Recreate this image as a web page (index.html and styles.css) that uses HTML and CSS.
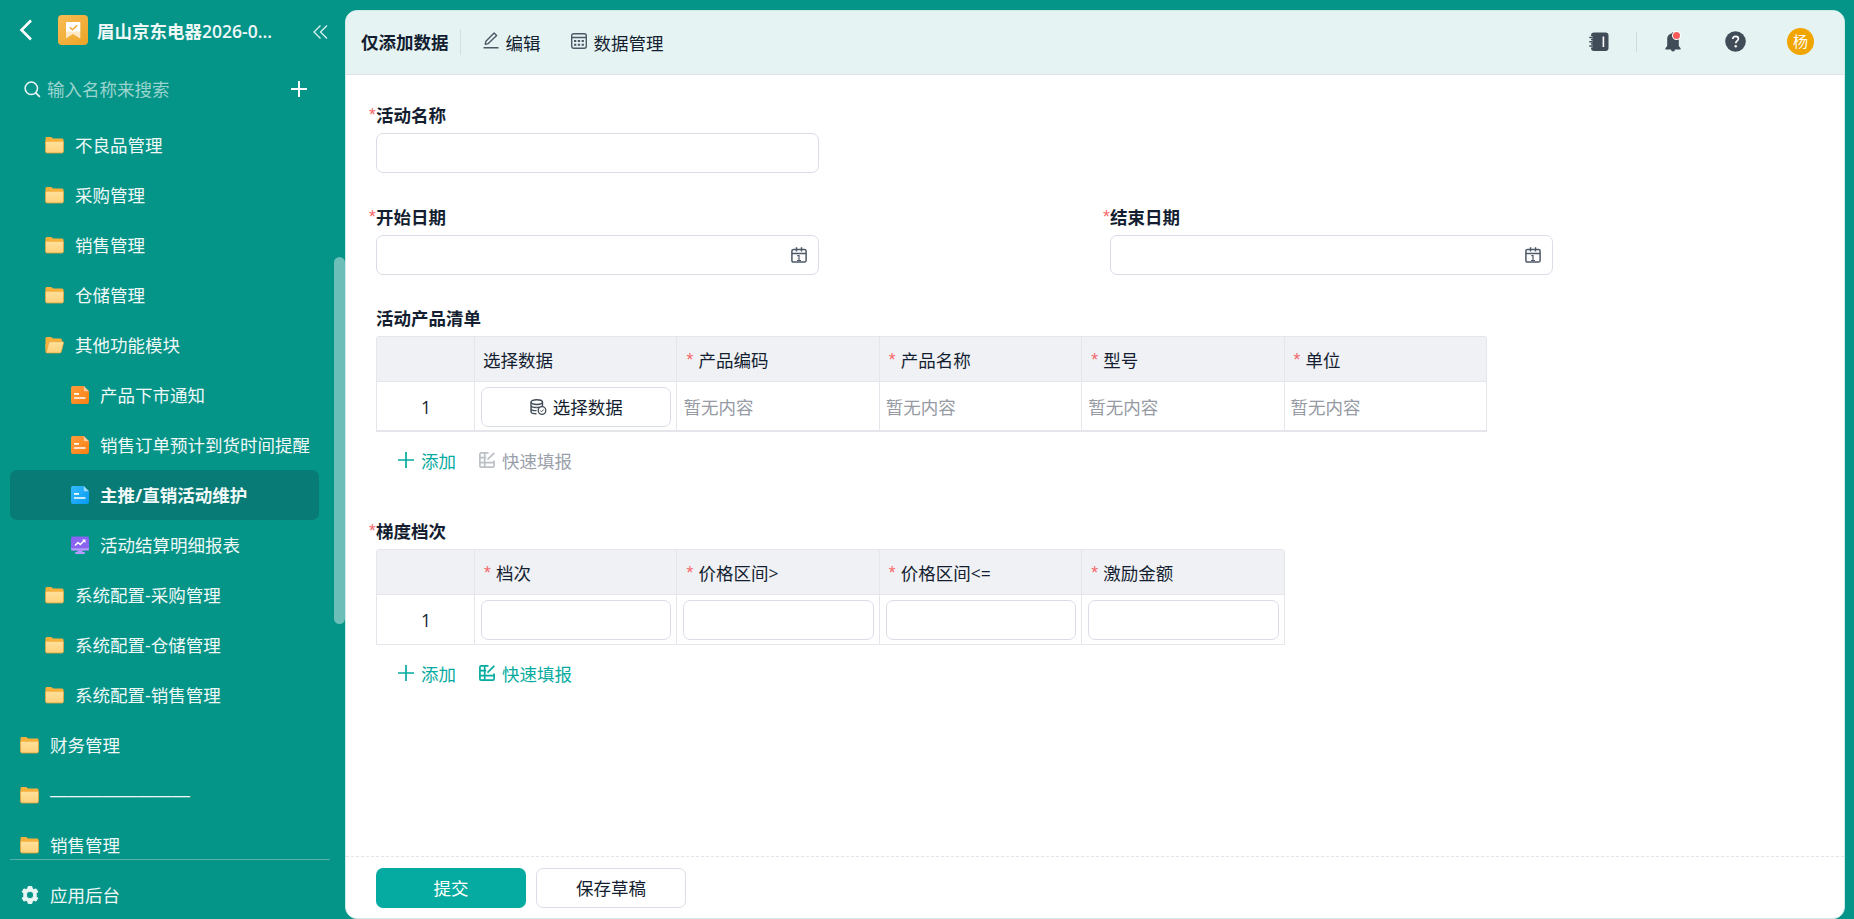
FILE: index.html
```html
<!DOCTYPE html>
<html lang="zh-CN">
<head>
  <meta charset="utf-8">
  <meta name="viewport" content="width=device-width, initial-scale=1">
  <title>主推/直销活动维护</title>
  <link rel="stylesheet" href="styles.css">
</head>
<body>
  <svg class="sprite" width="0" height="0" aria-hidden="true">
    <defs>
      <linearGradient id="folder-front" x1="0" y1="0" x2="0" y2="1">
        <stop offset="0" stop-color="#ffe09b"/>
        <stop offset="1" stop-color="#ffd27a"/>
      </linearGradient>
      <linearGradient id="logo-bg" x1="0" y1="0" x2="1" y2="1">
        <stop offset="0" stop-color="#f8bc55"/>
        <stop offset="1" stop-color="#eda425"/>
      </linearGradient>
      <linearGradient id="form-orange" x1="0" y1="0" x2="1" y2="1">
        <stop offset="0" stop-color="#ff9c3c"/>
        <stop offset="1" stop-color="#fb7f14"/>
      </linearGradient>
      <linearGradient id="form-blue" x1="0" y1="0" x2="1" y2="1">
        <stop offset="0" stop-color="#35bbff"/>
        <stop offset="1" stop-color="#069af0"/>
      </linearGradient>
    </defs>
    <symbol id="folder" viewBox="0 0 20 18">
      <path d="M.5 2.200C.5 1.100 1.100.5 2.200.5h4.300l2.200 1.700h9c1.100 0 1.800.7 1.800 1.800v6H.5z" fill="#f6b03c"/>
      <path d="M.5 5.500h19v10c0 1.200-.7 1.900-1.900 1.900H2.400c-1.200 0-1.900-.7-1.900-1.900z" fill="url(#folder-front)"/>
      <path d="M.5 5v10.500c0 1.200.7 1.900 1.900 1.900h15.200c1.200 0 1.900-.7 1.900-1.900V5" fill="none" stroke="#e3a63f" stroke-width=".9"/>
    </symbol>
    <symbol id="folder-open" viewBox="0 0 20 18">
      <path d="M.5 2.200C.5 1.100 1.100.5 2.200.5h4.300l2.200 1.700h7.300c1.100 0 1.800.7 1.800 1.800v10H2.400c-1.200 0-1.900-.7-1.900-1.900z" fill="#f6b03c"/>
      <path d="M.5 8v8c0 .8.600 1.400 1.400 1.400h3L5 8z" fill="#f6b03c"/>
      <path d="M5.200 5.500h13.300c.8 0 1.200.6 1 1.300l-2.300 9.200c-.2.900-.8 1.400-1.700 1.400H2.600c-.8 0-1.200-.5-1-1.200L3.900 6.500c.1-.6.600-1 1.300-1z" fill="url(#folder-front)" stroke="#e3a63f" stroke-width=".8"/>
    </symbol>
    <symbol id="form-lines" viewBox="0 0 18 18">
      <path d="M12.800 0 18 5.200h-4.200c-.6 0-1-.4-1-1z" fill="#fff" opacity=".55"/>
      <path d="M3 7.800h5M3 12h11.500" stroke="#fff" stroke-width="1.700"/>
    </symbol>
    <symbol id="date" viewBox="0 0 16 16">
      <path d="M2.500 2.500h11c.9 0 1.600.7 1.600 1.600v9.400c0 .9-.7 1.600-1.600 1.600h-11c-.9 0-1.600-.7-1.600-1.600V4.100c0-.9.700-1.600 1.600-1.600zM1 6.500h14M5.500.2v4.300M10.500.2v4.300" fill="none" stroke="currentColor" stroke-width="1.500"/>
      <path d="M6.300 8.700H8v5M6 13.500h4" fill="none" stroke="currentColor" stroke-width="1.200"/>
    </symbol>
    <symbol id="plus" viewBox="0 0 16 16">
      <path d="M8 0v16M0 8h16" stroke="currentColor" stroke-width="1.700"/>
    </symbol>
    <symbol id="quick-fill" viewBox="0 0 16 16">
      <path d="M9.500.9H2.100C1.400.9.900 1.400.9 2.100v11.800c0 .7.500 1.200 1.200 1.200h11.800c.7 0 1.200-.5 1.200-1.200V8.500M5.700 1v14M1 5.700h6.200M1 10.700h14M15.300.8 8.500 7.600" fill="none" stroke="currentColor" stroke-width="1.700"/>
    </symbol>
  </svg>

  <div class="app">
    <aside class="sidebar">
      <div class="sidebar__top">
        <svg class="back" width="14" height="22" viewBox="0 0 14 22"><path d="M12 1.500 2.500 11 12 20.500" fill="none" stroke="#fff" stroke-width="2.600"/></svg>
        <svg class="logo" width="30" height="30" viewBox="0 0 30 30">
          <rect width="30" height="30" rx="4" fill="url(#logo-bg)"/>
          <path d="M8.500 7h13a.8.800 0 0 1 .8.800v9L15 17.800l-7 5.300V7.500z" fill="#fff"/>
          <path d="M8 16.500h14.300v7L15 19l-7 4.300z" fill="#fde9c8"/>
          <path d="m11.800 12.200 2.700 2.500 4.600-4.300" fill="none" stroke="#f0ab33" stroke-width="1.500"/>
        </svg>
        <h1 class="app-name">眉山京东电器2026-0...</h1>
        <svg class="collapse" width="15" height="14" viewBox="0 0 15 14"><path d="M7.500.5 1 7l6.500 6.500M14 .5 7.500 7l6.500 6.500" fill="none" stroke="#dff2f0" stroke-width="1.300"/></svg>
      </div>

      <div class="search">
        <svg width="17" height="17" viewBox="0 0 17 17"><circle cx="7.300" cy="7.300" r="6.200" fill="none" stroke="#eef8f7" stroke-width="1.500"/><path d="m11.800 11.800 4 4" stroke="#eef8f7" stroke-width="1.800"/></svg>
        <span class="search__hint">输入名称来搜索</span>
        <svg class="search__add" width="16" height="16" viewBox="0 0 16 16"><path d="M8 0v16M0 8h16" stroke="#fff" stroke-width="2"/></svg>
      </div>

      <nav class="tree">
        <a class="tree__item tree__item--l2"><svg class="folder"><use href="#folder"/></svg>不良品管理</a>
        <a class="tree__item tree__item--l2"><svg class="folder"><use href="#folder"/></svg>采购管理</a>
        <a class="tree__item tree__item--l2"><svg class="folder"><use href="#folder"/></svg>销售管理</a>
        <a class="tree__item tree__item--l2"><svg class="folder"><use href="#folder"/></svg>仓储管理</a>
        <a class="tree__item tree__item--l2"><svg class="folder"><use href="#folder-open"/></svg>其他功能模块</a>
        <a class="tree__item tree__item--l3">
          <svg class="doc" viewBox="0 0 18 18"><path d="M2 0h10.800L18 5.200V16a2 2 0 0 1-2 2H2a2 2 0 0 1-2-2V2a2 2 0 0 1 2-2z" fill="url(#form-orange)"/><use href="#form-lines"/></svg>产品下市通知
        </a>
        <a class="tree__item tree__item--l3">
          <svg class="doc" viewBox="0 0 18 18"><path d="M2 0h10.800L18 5.200V16a2 2 0 0 1-2 2H2a2 2 0 0 1-2-2V2a2 2 0 0 1 2-2z" fill="url(#form-orange)"/><use href="#form-lines"/></svg>销售订单预计到货时间提醒
        </a>
        <a class="tree__item tree__item--l3 tree__item--active">
          <svg class="doc" viewBox="0 0 18 18"><path d="M2 0h10.800L18 5.200V16a2 2 0 0 1-2 2H2a2 2 0 0 1-2-2V2a2 2 0 0 1 2-2z" fill="url(#form-blue)"/><use href="#form-lines"/></svg>主推/直销活动维护
        </a>
        <a class="tree__item tree__item--l3">
          <svg class="doc" viewBox="0 0 18 18"><path d="M6.500 13h5v3h2.300v2H4.200v-2h2.300z" fill="#b39bff"/><rect y=".5" width="18" height="14" rx="1.800" fill="#8a63f0"/><path d="M0 12.300h18v.9c0 .8-.6 1.300-1.400 1.300H1.400C.6 14.500 0 14 0 13.200z" fill="#b39bff"/><path d="m4 9.500 3-3 2.300 2 4-4" fill="none" stroke="#fff" stroke-width="1.600"/><path d="M11 3.500h3.500v3.500z" fill="#fff"/></svg>活动结算明细报表
        </a>
        <a class="tree__item tree__item--l2"><svg class="folder"><use href="#folder"/></svg>系统配置-采购管理</a>
        <a class="tree__item tree__item--l2"><svg class="folder"><use href="#folder"/></svg>系统配置-仓储管理</a>
        <a class="tree__item tree__item--l2"><svg class="folder"><use href="#folder"/></svg>系统配置-销售管理</a>
        <a class="tree__item"><svg class="folder"><use href="#folder"/></svg>财务管理</a>
        <a class="tree__item tree__item--rule"><svg class="folder"><use href="#folder"/></svg>————————</a>
        <a class="tree__item"><svg class="folder"><use href="#folder"/></svg>销售管理</a>
      </nav>
      <span class="scrollbar"></span>

      <a class="backstage">
        <svg width="20" height="20" viewBox="0 0 20 20"><path fill="#e8f6f4" stroke="#e8f6f4" stroke-linejoin="round" fill-rule="evenodd" d="m8.200 1.500h3.600l.6 2.200 1.500.9 2.200-.7 1.700 2.900-1.600 1.800v2.800l1.600 1.800-1.700 2.900-2.200-.7-1.500.9-.6 2.200H8.200l-.6-2.200-1.500-.9-2.200.7-1.700-2.900 1.600-1.800V8.600L2.200 6.800l1.700-2.900 2.200.7 1.500-.9zM10 6.300a3.700 3.700 0 1 0 0 7.400 3.700 3.700 0 0 0 0-7.400z"/></svg>
        应用后台
      </a>
    </aside>

    <main class="panel">
      <header class="toolbar">
        <h2 class="toolbar__title">仅添加数据</h2>
        <button class="tool tool--edit">
          <svg width="16" height="17" viewBox="0 0 16 17"><path d="M.5 15.800h15M2.300 12.200l.6-3 8.200-8.200 2.500 2.500-8.300 8.100z" fill="none" stroke="#4e5967" stroke-width="1.400" stroke-linejoin="round"/></svg>
          编辑
        </button>
        <button class="tool tool--data">
          <svg width="16" height="16" viewBox="0 0 16 16"><rect x=".7" y=".7" width="14.600" height="14.600" rx="2" fill="none" stroke="#4e5967" stroke-width="1.400"/><path d="M.7 4.500h14.600" stroke="#4e5967" stroke-width="1.400"/><path d="M3 8h9.900M3 11.700h9.900" stroke="#4e5967" stroke-width="1.900" stroke-dasharray="2.300 1.500"/></svg>
          数据管理
        </button>
        <div class="toolbar__right">
          <svg class="book" width="20" height="20" viewBox="0 0 20 20"><rect x="2" y=".5" width="17.500" height="18.500" rx="3" fill="#414c59"/><path d="M0 5.500h3.500M0 9.700h3.500M0 14h3.500" stroke="#e5f3f2" stroke-width="2.800"/><path d="M.3 5.500h3.500M.3 9.700h3.500M.3 14h3.500" stroke="#414c59" stroke-width="1.500"/><path d="M14.400 4.500v10.500" stroke="#fff" stroke-width="1.600"/></svg>
          <span class="notice">
            <svg width="16" height="21" viewBox="0 0 16 21"><path d="M7.200 1h1.600v1.300c3 .4 5 2.800 5 5.900V15l1.800 2.200v1.300H10a2 2 0 0 1-4 0H.4v-1.300L2.200 15V8.200c0-3.100 2-5.500 5-5.900z" fill="#414c59"/></svg>
            <i class="notice__dot"></i>
          </span>
          <svg class="help" width="21" height="21" viewBox="0 0 21 21"><circle cx="10.500" cy="10.500" r="10.300" fill="#414c59"/><path d="M7.700 8.100c0-1.700 1.200-2.800 2.900-2.800s2.800 1 2.800 2.500c0 2-2.700 2.200-2.700 4.500" fill="none" stroke="#fff" stroke-width="1.700"/><circle cx="10.700" cy="15.200" r="1.200" fill="#fff"/></svg>
          <span class="avatar">杨</span>
        </div>
      </header>

      <form class="form">
        <div class="field">
          <label class="label label--required">活动名称</label>
          <div class="input"></div>
        </div>

        <div class="row">
          <div class="field">
            <label class="label label--required">开始日期</label>
            <div class="input"><svg width="16" height="16"><use href="#date"/></svg></div>
          </div>
          <div class="field">
            <label class="label label--required">结束日期</label>
            <div class="input"><svg width="16" height="16"><use href="#date"/></svg></div>
          </div>
        </div>

        <section class="subform">
          <label class="label">活动产品清单</label>
          <div class="grid grid--products">
            <div class="th"></div>
            <div class="th">选择数据</div>
            <div class="th th--required">产品编码</div>
            <div class="th th--required">产品名称</div>
            <div class="th th--required">型号</div>
            <div class="th th--required">单位</div>
            <div class="td td--index">1</div>
            <div class="td td--control">
              <button type="button" class="pick">
                <svg width="17" height="16" viewBox="0 0 17 16"><path d="M1 3.200v9.300c0 1.300 2.200 2.300 5.500 2.300M1 6.300c0 1.300 2.400 2.200 5.500 2.200M1 9.400c0 1.300 2.400 2.200 5.500 2.200M12.500 3.200v3.600" fill="none" stroke="#414c59" stroke-width="1.400"/><path d="M6.500 8.500c2.500 0 6-.6 6-2.200" fill="none" stroke="#414c59" stroke-width="1.300"/><ellipse cx="6.750" cy="3.100" rx="5.750" ry="2.400" fill="none" stroke="#414c59" stroke-width="1.400"/><circle cx="12" cy="11.500" r="3.800" fill="#fff" stroke="#414c59" stroke-width="1.300"/><path d="m10.300 11.600 1.200 1.200 2.200-2.300" fill="none" stroke="#414c59"/></svg>
                选择数据
              </button>
            </div>
            <div class="td td--empty">暂无内容</div>
            <div class="td td--empty">暂无内容</div>
            <div class="td td--empty">暂无内容</div>
            <div class="td td--empty">暂无内容</div>
          </div>
          <div class="actions">
            <a class="action"><svg width="16" height="16"><use href="#plus"/></svg>添加</a>
            <a class="action action--disabled"><svg width="16" height="16"><use href="#quick-fill"/></svg>快速填报</a>
          </div>
        </section>

        <section class="subform">
          <label class="label label--required">梯度档次</label>
          <div class="grid grid--levels">
            <div class="th"></div>
            <div class="th th--required">档次</div>
            <div class="th th--required">价格区间&gt;</div>
            <div class="th th--required">价格区间&lt;=</div>
            <div class="th th--required">激励金额</div>
            <div class="td td--index">1</div>
            <div class="td td--control"><div class="input"></div></div>
            <div class="td td--control"><div class="input"></div></div>
            <div class="td td--control"><div class="input"></div></div>
            <div class="td td--control"><div class="input"></div></div>
          </div>
          <div class="actions">
            <a class="action"><svg width="16" height="16"><use href="#plus"/></svg>添加</a>
            <a class="action"><svg width="16" height="16"><use href="#quick-fill"/></svg>快速填报</a>
          </div>
        </section>
      </form>

      <footer class="footer">
        <button class="btn btn--primary">提交</button>
        <button class="btn">保存草稿</button>
      </footer>
    </main>
  </div>
</body>
</html>
```
FILE: styles.css
```css
*, *::before, *::after {
  box-sizing: border-box;
  margin: 0;
  padding: 0;
}

body {
  height: 100vh;
  overflow: hidden;
  background: #059488;
  color: #141e31;
  font-family: "Open Sans", "Noto Sans CJK SC", sans-serif;
  font-size: 17.5px;
  line-height: 26px;
}

button {
  border: none;
  background: none;
  color: inherit;
  font: inherit;
}

svg {
  flex: none;
}

.sprite {
  position: absolute;
}

.app {
  display: flex;
  height: 100vh;
}

/* 侧边栏 */
.sidebar {
  position: relative;
  display: flex;
  flex-direction: column;
  width: 345px;
  color: #f0f9f8;
  white-space: nowrap;
}

.sidebar__top {
  display: flex;
  align-items: center;
  height: 60px;
  padding: 0 17px 0 20px;
}

.back {
  margin-left: -1px;
}

.logo {
  margin-left: 25px;
}

.app-name {
  flex: 1;
  margin: 2px 0 0 9px;
  font-size: 17.5px;
  font-weight: 600;
}

.collapse {
  margin-top: 3px;
}

.search {
  display: flex;
  align-items: center;
  height: 60px;
  padding: 0 38px 2px 24px;
}

.search__hint {
  flex: 1;
  margin-left: 6px;
  color: #9bd4cf;
}

.tree {
  height: 739px;
  overflow: hidden;
}

.tree__item {
  display: flex;
  gap: 11px;
  align-items: center;
  height: 50px;
  margin: 0 26px 0 10px;
  padding-left: 10px;
  border-radius: 7px;
}

.tree__item--l2 {
  padding-left: 35px;
}

.tree__item--l3 {
  padding-left: 61px;
}

.tree__item--active {
  background: #097b76;
  font-weight: 700;
}

.tree__item--rule {
  font-family: "Liberation Sans", sans-serif;
}

.folder {
  width: 19px;
  height: 18px;
}

.doc {
  width: 18px;
  height: 18px;
}

.scrollbar {
  position: absolute;
  top: 257px;
  right: 0;
  width: 11px;
  height: 367px;
  border-radius: 6px;
  background: #6bbfb8;
}

.backstage {
  display: flex;
  flex: 1;
  gap: 10px;
  align-items: center;
  margin: 0 15px 0 10px;
  padding: 11px 0 0 10px;
  border-top: 1px solid #50b4ac;
}

/* 主面板 */
.panel {
  display: flex;
  flex: 1;
  flex-direction: column;
  margin: 10px 9px 0 0;
  border: 1px solid #cdebe8;
  border-radius: 12px;
  background: #ffffff;
  overflow: hidden;
}

.toolbar {
  display: flex;
  align-items: center;
  height: 64px;
  padding: 0 0 1px 15px;
  border-bottom: 1px solid #dfe3e8;
  background: #e5f3f2;
}

.toolbar__title {
  padding-right: 11px;
  border-right: 1px solid #d3dfe1;
  font-size: 17.5px;
  font-weight: 700;
}

.tool {
  display: flex;
  gap: 7px;
  align-items: center;
  padding-top: 1px;
}

.tool svg {
  margin-top: -4px;
}

.tool--edit {
  margin-left: 22px;
}

.tool--data {
  margin-left: 30px;
}

.toolbar__right {
  display: flex;
  align-items: center;
  margin-left: auto;
  padding: 0 30px 1px 0;
}

.notice {
  position: relative;
  display: flex;
  align-items: center;
  height: 20px;
  margin-left: 27px;
  padding-left: 28px;
  border-left: 1px solid #cfdcdf;
}

.notice__dot {
  position: absolute;
  top: 0;
  right: 1px;
  width: 7px;
  height: 7px;
  border-radius: 50%;
  background: #f95a5a;
  box-shadow: 0 0 0 1px #ffffff;
}

.help {
  margin-left: 44px;
}

.avatar {
  width: 27px;
  height: 27px;
  margin-left: 41px;
  border-radius: 50%;
  background: #f0a500;
  color: #ffffff;
  font-size: 15px;
  line-height: 26px;
  text-align: center;
}

/* 表单 */
.form {
  flex: 1;
  padding: 29px 30px 0;
}

.field {
  width: 443px;
  margin-bottom: 33px;
}

.row {
  display: grid;
  grid-template-columns: 734px 443px;
}

.row .field {
  margin-bottom: 31px;
}

.label {
  position: relative;
  display: block;
  height: 29px;
  line-height: 23px;
  font-weight: 700;
}

.label--required::before {
  content: "*";
  position: absolute;
  left: -7px;
  color: #f5686a;
  font-family: "Liberation Sans", sans-serif;
  font-weight: 400;
}

.input {
  display: flex;
  align-items: center;
  justify-content: flex-end;
  width: 100%;
  height: 40px;
  padding-right: 11px;
  border: 1px solid #dadde6;
  border-radius: 7px;
  color: #4e5967;
}

.subform {
  height: 213px;
}

.subform .label {
  height: 30px;
  line-height: 25px;
}

.grid {
  display: grid;
  width: max-content;
  border: 1px solid #e4e6ec;
  border-radius: 3px 3px 0 0;
  overflow: hidden;
}

.grid--products {
  grid-template-rows: 45px 48px;
  grid-template-columns: 97px repeat(5, 202.4px);
  border-bottom-width: 2px;
}

.grid--levels {
  grid-template-rows: 45px 49px;
  grid-template-columns: 97px repeat(4, 202.4px);
}

.th,
.td {
  display: flex;
  align-items: center;
  border-left: 1px solid #e4e6ec;
}

.th:first-child,
.td--index {
  border-left: none;
}

.th {
  padding: 2px 0 0 8px;
  border-bottom: 1px solid #e4e6ec;
  background: #f0f1f5;
}

.th--required::before {
  content: "*";
  width: 13px;
  padding-left: 1px;
  color: #f5686a;
  font-family: "Liberation Sans", sans-serif;
}

.td {
  padding: 1px 5px 0 6px;
}

.td--control {
  align-items: flex-start;
  padding-top: 5px;
}

.td--index {
  justify-content: center;
}

.td--empty {
  color: #959aa3;
}

.pick {
  display: flex;
  gap: 6px;
  align-items: center;
  justify-content: center;
  width: 100%;
  height: 40px;
  border: 1px solid #dadde6;
  border-radius: 7px;
}

.actions {
  display: flex;
  gap: 23px;
  align-items: center;
  height: 58px;
  padding-left: 22px;
}

.action {
  display: flex;
  gap: 7px;
  align-items: center;
  color: #05aba0;
}

.action svg {
  margin-top: -3px;
}

.action--disabled {
  color: #9aa0aa;
}

.action--disabled svg {
  color: #bcc0c7;
}

.footer {
  display: flex;
  gap: 10px;
  height: 62px;
  padding: 11px 30px 0;
  border-top: 1px dashed #e1e4ea;
}

.btn {
  width: 150px;
  height: 40px;
  border: 1px solid #dadde6;
  border-radius: 7px;
}

.btn--primary {
  border: none;
  background: #05aba0;
  color: #ffffff;
}
```
